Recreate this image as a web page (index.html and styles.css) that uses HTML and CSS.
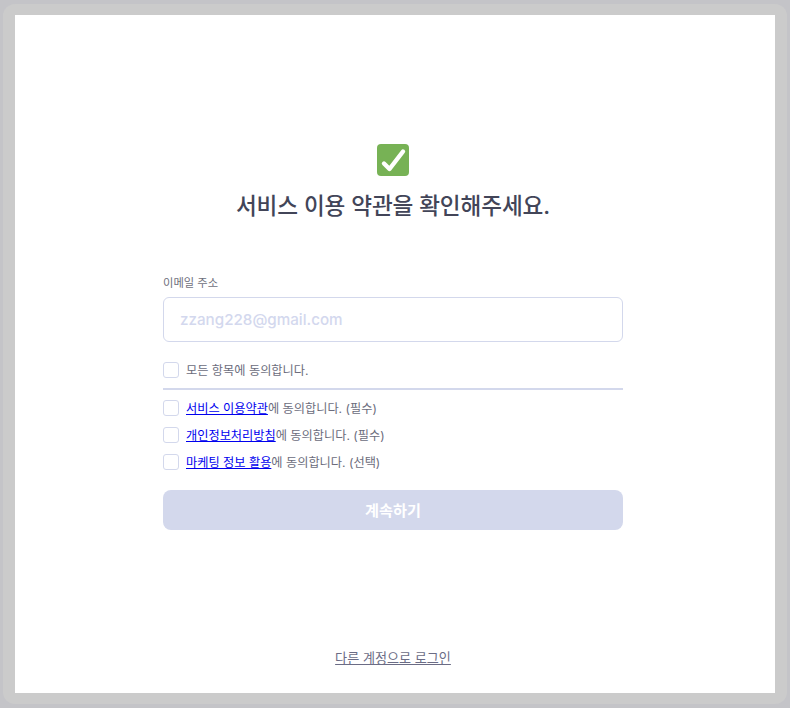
FILE: index.html
```html
<!DOCTYPE html>
<html lang="ko">
<head>
<meta charset="utf-8">
<title>서비스 이용 약관</title>
<link rel="stylesheet" href="styles.css">
</head>
<body>
<div class="backdrop">
  <div class="frame">
    <main class="sheet">
      <section class="intro">
        <svg class="check-icon" width="32" height="32" viewBox="0 0 32 32" aria-hidden="true">
          <rect width="32" height="32" rx="4" fill="#77b255"/>
          <path d="M7 19.5l5.5 5.5L26 7.5" fill="none" stroke="#fff" stroke-width="4.4" stroke-linecap="round" stroke-linejoin="round"/>
        </svg>
        <h1 class="title">서비스 이용 약관을 확인해주세요.</h1>
      </section>
      <form class="form">
        <label class="field-label">이메일 주소</label>
        <div class="email-input">zzang228@gmail.com</div>
        <div class="row all-row"><span class="box"></span><span>모든 항목에 동의합니다.</span></div>
        <div class="terms">
          <div class="row"><span class="box"></span><span><a href="#">서비스 이용약관</a>에 동의합니다. (필수)</span></div>
          <div class="row"><span class="box"></span><span><a href="#">개인정보처리방침</a>에 동의합니다. (필수)</span></div>
          <div class="row"><span class="box"></span><span><a href="#">마케팅 정보 활용</a>에 동의합니다. (선택)</span></div>
        </div>
        <button class="submit" type="button">계속하기</button>
      </form>
      <a class="other" href="#">다른 계정으로 로그인</a>
    </main>
  </div>
</div>
</body>
</html>
```
FILE: styles.css
```css
html, body {
  margin: 0;
  height: 100%;
}
body {
  font-family: Inter, "Noto Sans CJK KR", sans-serif;
  background: #c4c4c8;
}
.backdrop {
  box-sizing: border-box;
  width: 790px;
  height: 708px;
  padding: 4px 3px;
}
.frame {
  box-sizing: border-box;
  height: 100%;
  padding: 11px 12px;
  background: #cbcbcb;
  border-radius: 12px;
}
.sheet {
  box-sizing: border-box;
  height: 100%;
  background: #fff;
  display: flex;
  flex-direction: column;
  align-items: center;
  padding: 129px 4px 0 0;
}
.intro {
  display: flex;
  flex-direction: column;
  align-items: center;
}
.check-icon {
  display: block;
}
.title {
  margin: 14px 0 0;
  font-size: 22.6px;
  line-height: 32px;
  font-weight: 500;
  color: #424558;
  letter-spacing: -0.1px;
}
.form {
  width: 460px;
  margin-top: 54px;
  display: flex;
  flex-direction: column;
}
.field-label {
  font-size: 11.3px;
  line-height: 14px;
  color: #6e6f7c;
}
.email-input {
  box-sizing: border-box;
  height: 45px;
  margin-top: 7px;
  padding: 0 16px;
  border: 1px solid #d3d8ec;
  border-radius: 6px;
  font-size: 15.2px;
  line-height: 43px;
  font-weight: 500;
  color: #d3d8ee;
}
.row {
  display: flex;
  align-items: center;
  gap: 7px;
  height: 27px;
  font-size: 12.2px;
  color: #6b6c7c;
}
.all-row {
  height: 48px;
  border-bottom: 2px solid #d3d8ec;
  box-sizing: border-box;
  padding-top: 13px;
  padding-bottom: 4px;
}
.terms {
  margin-top: 4px;
}
.box {
  box-sizing: border-box;
  width: 16px;
  height: 16px;
  border: 1px solid #d3d8ec;
  border-radius: 3px;
  background: #fff;
}
.row a {
  color: #0000ee;
}
.submit {
  height: 40px;
  margin-top: 15px;
  padding: 0 0 3px;
  border: 0;
  border-radius: 8px;
  background: #d3d8ec;
  color: #fff;
  font: 600 15.2px Inter, "Noto Sans CJK KR", sans-serif;
}
.other {
  margin-top: 118px;
  font-size: 13.1px;
  line-height: 20px;
  color: #6b6c85;
}
```
